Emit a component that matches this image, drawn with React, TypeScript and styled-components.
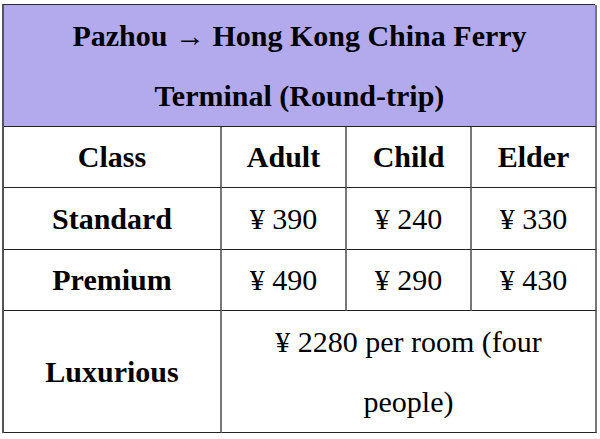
import React from "react";
import styled, { createGlobalStyle } from "styled-components";

const GlobalStyle = createGlobalStyle`
  html, body {
    margin: 0;
    padding: 0;
    background: #ffffff;
  }
  body {
    font-family: "Liberation Serif", "Times New Roman", serif;
    color: #000000;
  }
`;

const Page = styled.div`
  padding: 4px 0 0 2px;
`;

const Table = styled.div`
  display: grid;
  grid-template-columns: 218px 125px 125px 125px;
  width: 593px;
  box-sizing: border-box;
  border-top: 1.5px solid #2a2a2a;
  border-left: 2px solid #555555;
`;

const Cell = styled.div<{ $span?: number; $bold?: boolean; $rows?: number; $head?: boolean }>`
  grid-column: span ${(p) => p.$span ?? 1};
  box-sizing: border-box;
  height: ${(p) => (p.$rows ?? 1) * 61 + ((p.$rows ?? 1) > 1 ? 0 : 0.4)}px;
  display: flex;
  align-items: center;
  justify-content: center;
  text-align: center;
  font-size: 30px;
  line-height: 60px;
  font-weight: ${(p) => (p.$bold ? 700 : 400)};
  background: ${(p) => (p.$head ? "#b3aaee" : "#ffffff")};
  border-right: 2px solid #777777;
  border-bottom: 1.5px solid #222222;
`;

const prices = [
  { cls: "Standard", values: ["¥ 390", "¥ 240", "¥ 330"] },
  { cls: "Premium", values: ["¥ 490", "¥ 290", "¥ 430"] },
];

export default function App() {
  return (
    <>
      <GlobalStyle />
      <Page>
        <Table>
          <Cell $span={4} $rows={2} $bold $head>
            <div>
              Pazhou → Hong Kong China Ferry
              <br />
              Terminal (Round-trip)
            </div>
          </Cell>

          <Cell $bold>Class</Cell>
          <Cell $bold>Adult</Cell>
          <Cell $bold>Child</Cell>
          <Cell $bold>Elder</Cell>

          {prices.map((row) => (
            <React.Fragment key={row.cls}>
              <Cell $bold>{row.cls}</Cell>
              {row.values.map((v, i) => (
                <Cell key={i}>{v}</Cell>
              ))}
            </React.Fragment>
          ))}

          <Cell $bold $rows={2}>Luxurious</Cell>
          <Cell $span={3} $rows={2}>
            <div>
              ¥ 2280 per room (four
              <br />
              people)
            </div>
          </Cell>
        </Table>
      </Page>
    </>
  );
}
